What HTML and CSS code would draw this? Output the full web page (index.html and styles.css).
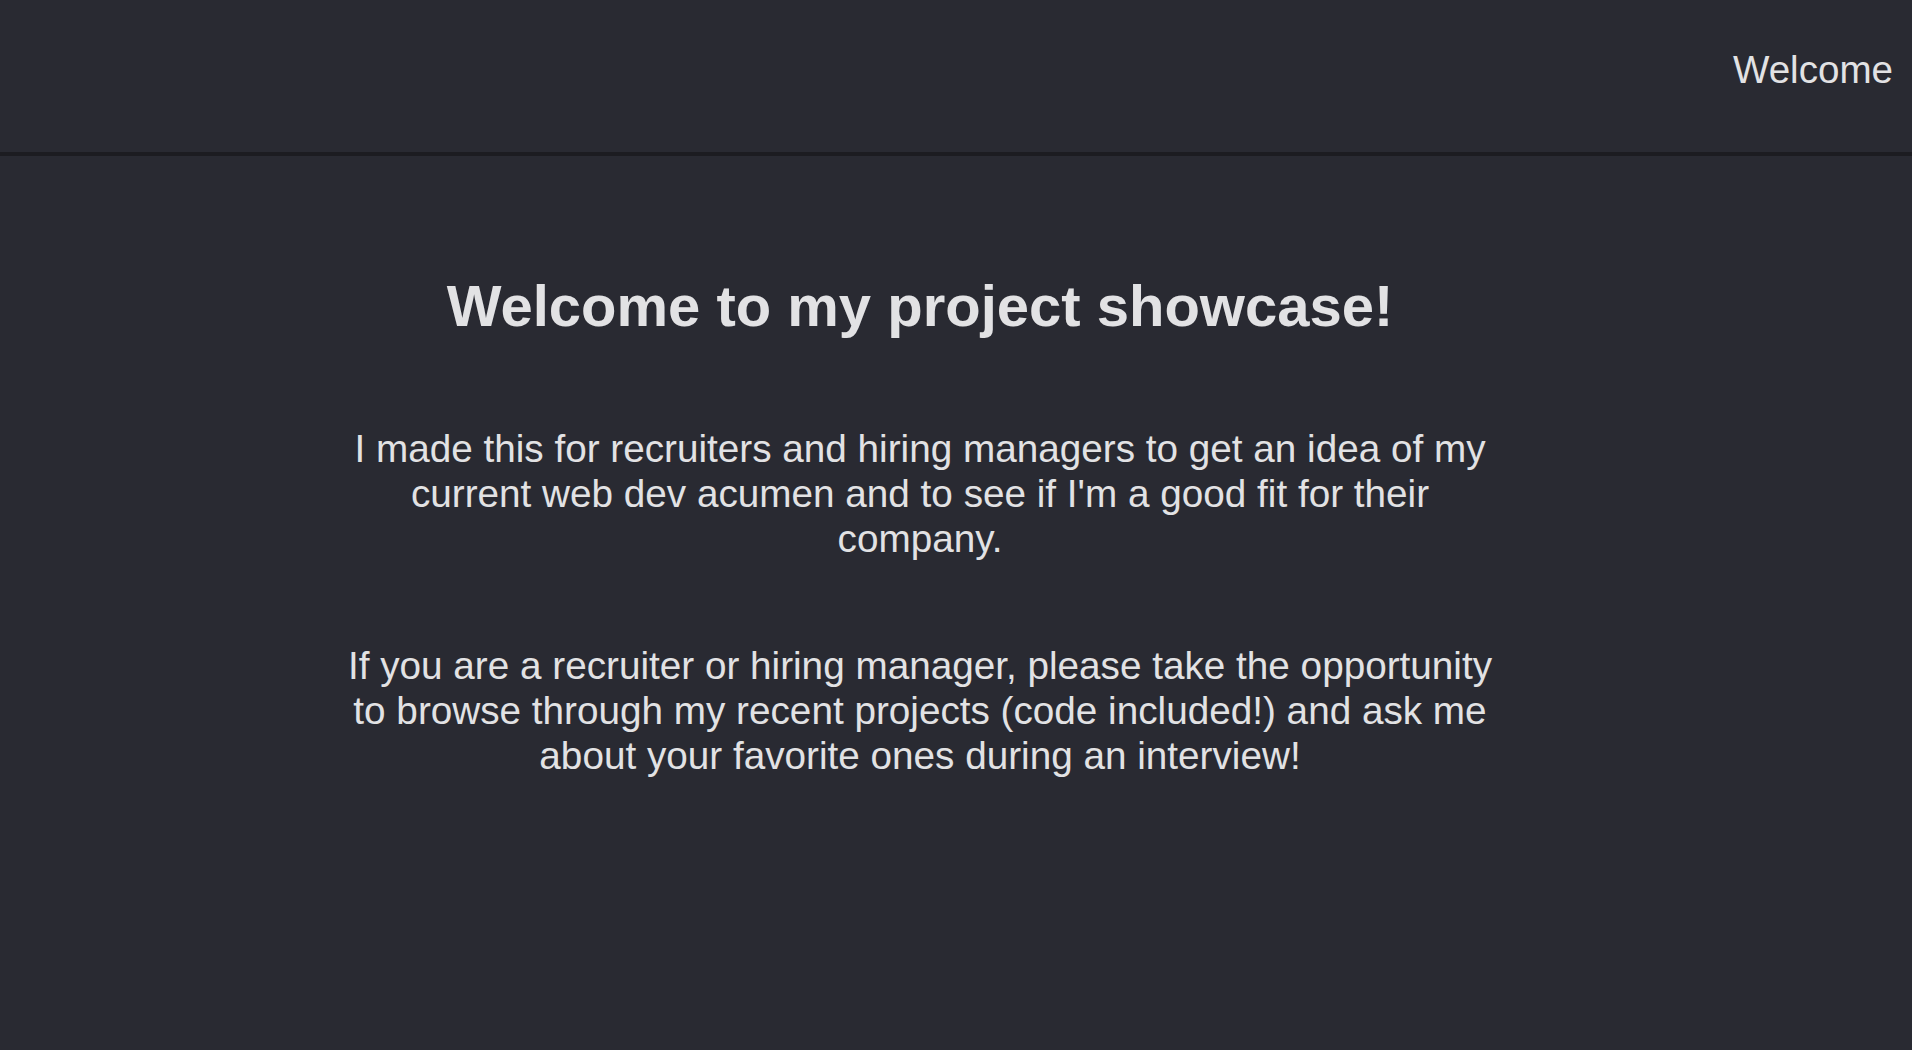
FILE: index.html
```html
<!DOCTYPE html>
<html lang="en">
<head>
<meta charset="utf-8">
<title>Project Showcase</title>
<link rel="stylesheet" href="styles.css">
</head>
<body>
<header class="topbar">
  <nav class="nav">
    <a class="nav-link" href="#">Welcome</a>
  </nav>
</header>
<main class="main">
  <section class="intro">
    <h1 class="title">Welcome to my project showcase!</h1>
    <p class="lead">I made this for recruiters and hiring managers to get an idea of my current web dev acumen and to see if I'm a good fit for their company.</p>
    <p class="lead">If you are a recruiter or hiring manager, please take the opportunity to browse through my recent projects (code included!) and ask me about your favorite ones during an interview!</p>
  </section>
</main>
</body>
</html>
```

FILE: styles.css
```css
html, body {
  margin: 0;
  padding: 0;
}
body {
  background: #292a32;
  color: #e2e2e4;
  font-family: "Liberation Sans", Arial, sans-serif;
  min-height: 1050px;
}
.topbar {
  height: 152px;
  border-bottom: 4px solid #1c1c21;
  box-sizing: content-box;
}
.nav {
  display: flex;
  justify-content: flex-end;
  padding: 48px 19px 0 0;
}
.nav-link {
  color: #e2e2e4;
  text-decoration: none;
  font-size: 38.6px;
  line-height: 44px;
}
.main {
  padding: 117px 72px 0 0;
  display: flex;
  justify-content: center;
}
.intro {
  width: 1160px;
  text-align: center;
}
.title {
  margin: 0;
  font-size: 58px;
  line-height: 66px;
  font-weight: 700;
}
.lead {
  margin: 87px 0 0 0;
  font-size: 38.7px;
  line-height: 45px;
}
.lead + .lead {
  margin-top: 82px;
}
```
